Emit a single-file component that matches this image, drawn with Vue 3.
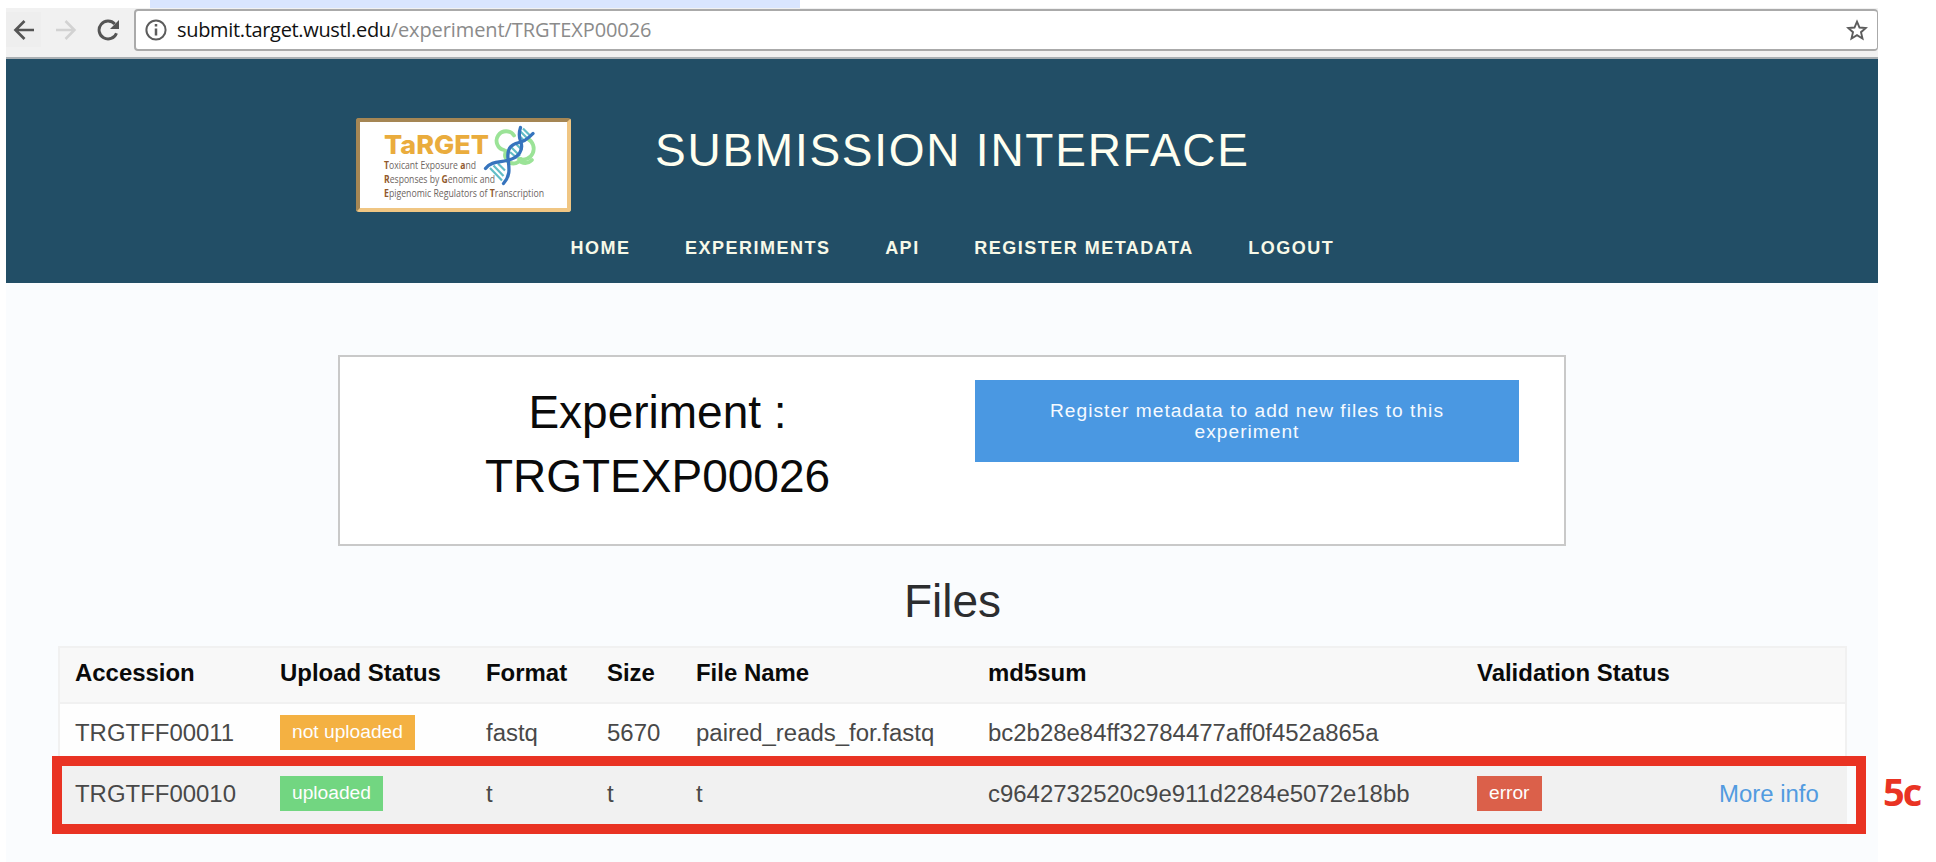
<script setup>
const links = ['HOME', 'EXPERIMENTS', 'API', 'REGISTER METADATA', 'LOGOUT']
const headings = ['Accession', 'Upload Status', 'Format', 'Size', 'File Name', 'md5sum', 'Validation Status', '']
const files = [
  { id: 'TRGTFF00011', upload: 'not uploaded', tone: 'pending', format: 'fastq', size: '5670', name: 'paired_reads_for.fastq', md5: 'bc2b28e84ff32784477aff0f452a865a' },
  { id: 'TRGTFF00010', upload: 'uploaded', tone: 'done', format: 't', size: 't', name: 't', md5: 'c9642732520c9e911d2284e5072e18bb', validation: 'error', more: 'More info' },
]
</script>

<template>
  <div class="canvas">
    <div class="tab-strip"></div>
    <div class="browser">
      <div class="toolbar">
        <span class="tool back">
          <svg width="22" height="22" viewBox="0 0 22 22"><path d="M21 11H3M11.5 2 2.500 11l9 9" fill="none" stroke="#555" stroke-width="2.700" /></svg>
        </span>
        <svg class="forward" width="22" height="22" viewBox="0 0 22 22"><path d="M1 11h18M10.500 2l9 9-9 9" fill="none" stroke="#d2d2d2" stroke-width="2.500" /></svg>
        <svg class="reload" width="22" height="22" viewBox="0 0 22 22"><path d="M19.500 14.200A9 9 0 1 1 17.800 5" fill="none" stroke="#555" stroke-width="2.900" /><path d="M22 1v9h-9z" fill="#555" /></svg>
        <div class="address">
          <svg class="info" width="22" height="22" viewBox="0 0 22 22"><circle cx="11" cy="11" r="9.600" fill="none" stroke="#5c5c5c" stroke-width="2" /><path d="M11 5v2.600M11 9.500v7" stroke="#5c5c5c" stroke-width="2.500" /></svg>
          <span class="url"><span class="host">submit.target.wustl.edu</span><span class="path">/experiment/TRGTEXP00026</span></span>
          <svg class="star" width="22" height="22" viewBox="0 0 22 22"><path d="M11 2.600l2.500 5.900 6.300.5-4.800 4.200 1.500 6.300L11 16.200l-5.500 3.300L7 13.200 2.200 9l6.300-.5z" fill="none" stroke="#5c5c5c" stroke-width="1.900" /></svg>
        </div>
      </div>

      <header class="banner">
        <div class="brand">
          <div class="logo">
            <svg width="207" height="86" viewBox="360 122 207 86">
              <g fill="none" stroke="#9be397" stroke-width="3.800" stroke-linecap="round">
                <path d="M514 135.500a9.500 9.500 0 1 0-10 14.500" />
                <path d="M528 139a11 11 0 0 1-9 20" />
                <path d="M506 151a8 8 0 1 0 15 8" />
                <path d="M532 160a10 10 0 0 1-11 2" />
              </g>
              <path d="M490 168l12 12.500M493.500 165.500l10 10.500M498 163.500l7 7M511 147l9 9M510 152l7 6M516 144l6 6M520.500 131.500l7 7M523 128.500l6.500 6.500M520.500 137l4 4" stroke="#62bdc6" stroke-width="2.200" />
              <g fill="none" stroke="#3674bd" stroke-width="3.300" stroke-linecap="round">
                <path d="M485.500 168.500C491 161 500 162.500 507 160.500 519 158 524 150 520.500 141 519 137 519 132 520.500 127.500" />
                <path d="M503.500 183.500C511 175 509 168 508 158 507 149 511 144 519 142.500 527 141 529.500 136.500 533 133.500" />
              </g>
              <text class="mark" x="384" y="154" textLength="105" lengthAdjust="spacingAndGlyphs">TaRGET</text>
              <g class="tagline">
                <text x="384" y="169" textLength="92" lengthAdjust="spacingAndGlyphs"><tspan>T</tspan>oxicant Exposure <tspan>a</tspan>nd</text>
                <text x="384" y="183" textLength="111" lengthAdjust="spacingAndGlyphs"><tspan>R</tspan>esponses by <tspan>G</tspan>enomic and</text>
                <text x="384" y="197" textLength="160" lengthAdjust="spacingAndGlyphs"><tspan>E</tspan>pigenomic Regulators of <tspan>T</tspan>ranscription</text>
              </g>
            </svg>
          </div>
          <h1>SUBMISSION INTERFACE</h1>
        </div>
        <nav><a v-for="link in links" :key="link">{{ link }}</a></nav>
      </header>

      <section class="card">
        <h2>Experiment :<br>TRGTEXP00026</h2>
        <button class="register">Register metadata to add new files to this<br>experiment</button>
      </section>

      <section class="files">
        <h2>Files</h2>
        <div class="table">
          <div class="row head"><span v-for="(h, i) in headings" :key="i">{{ h }}</span></div>
          <div v-for="f in files" :key="f.id" class="row">
            <span>{{ f.id }}</span>
            <span><b class="badge" :class="f.tone">{{ f.upload }}</b></span>
            <span>{{ f.format }}</span>
            <span>{{ f.size }}</span>
            <span>{{ f.name }}</span>
            <span>{{ f.md5 }}</span>
            <span><b v-if="f.validation" class="badge failed">{{ f.validation }}</b></span>
            <span><a v-if="f.more" class="more">{{ f.more }}</a></span>
          </div>
        </div>
      </section>
    </div>
    <div class="highlight"></div>
    <div class="callout">5c</div>
  </div>
</template>

<style>
body { margin: 0; background: #fff; overflow: hidden; }
</style>

<style scoped>
* { box-sizing: border-box; }
.canvas { position: relative; width: 1936px; height: 862px; overflow: hidden; background: #fff; font-family: "Liberation Sans", Arial, sans-serif; }
.tab-strip { width: 650px; height: 8px; margin-left: 150px; background: #d9e5fe; }
.browser { width: 1872px; height: 854px; margin-left: 6px; background: #fafcfe; }
.toolbar { display: flex; align-items: center; height: 51px; padding-bottom: 6px; background: #f1f1f1; border-bottom: 2px solid #a9afb3; }
.toolbar svg { display: block; flex: none; }
.back { display: flex; align-items: center; width: 35px; height: 35px; padding-left: 7px; background: #eee; }
.forward { margin-left: 14px; }
.reload { margin-left: 20px; }
.address { display: flex; align-items: center; flex: 1; height: 42px; margin-left: 15px; padding: 0 9px 0 9px; background: #fff; border: 2px solid #aaa; border-right-width: 1px; border-radius: 4px; }
.url { margin-left: 10px; padding-top: 1px; font: 20px/38px "Open Sans", "Noto Sans", sans-serif; white-space: nowrap; letter-spacing: -0.100px; }
.host { color: #111; letter-spacing: -0.330px; }
.path { color: #8b8b8b; }
.star { margin-left: auto; }

.banner { height: 224px; padding-top: 59px; background: #224e66; }
.brand { display: flex; align-items: flex-start; height: 94px; padding-left: 350px; }
.logo { width: 215px; height: 94px; border: 4px solid; border-color: #a58654 #f0c683 #f0c683 #a58654; border-radius: 3px; background: #fff; }
.logo svg { display: block; }
.mark { font: 800 26px Inter, sans-serif; fill: #eaac3d; }
.tagline { font: 10.500px "Open Sans", sans-serif; fill: #6d655f; }
.tagline tspan { font-weight: 700; fill: #92592c; }
h1 { margin: 0 0 0 84px; font-size: 46px; font-weight: 400; line-height: 64px; letter-spacing: 1.750px; color: #fffff0; white-space: nowrap; }
nav { display: flex; gap: 54.500px; margin: 24px 0 0 564.600px; font-size: 18px; font-weight: 700; line-height: 24px; letter-spacing: 1.500px; color: #f7f9e8; white-space: nowrap; }

.card { display: flex; align-items: flex-start; width: 1228px; height: 191px; margin: 72px 0 0 332px; padding-top: 23px; background: #fff; border: 2px solid #c9c9c9; }
h2 { margin: 0; font-size: 46px; font-weight: 400; line-height: 64px; text-align: center; }
.card h2 { width: 635px; color: #0a0a0a; }
.register { width: 544px; height: 82px; padding: 0; border: 0; background: #4a98e2; color: #f5faff; font: 19.200px/21px "Liberation Sans", Arial, sans-serif; letter-spacing: 1px; }

.files { width: 1789px; margin: 23px 0 0 52px; }
.files h2 { color: #2c2d2f; }
.table { margin-top: 13px; border: 2px solid #f1f1f1; border-bottom: 0; background: #fefefe; }
.row { display: grid; grid-template-columns: 205px 206px 121px 89px 292px 489px 242px 1fr; height: 61px; padding: 0 0 4px 15px; font-size: 23.950px; line-height: 57px; color: #484848; white-space: nowrap; }
.row:last-child { background: #f1f1f1; }
.head { height: 56px; line-height: 50px; font-weight: 700; color: #0a0a0a; background: #f8f8f8; border-bottom: 2px solid #f1f1f1; }
.badge { display: inline-block; height: 35px; padding: 0 12px 2px; font-size: 19.200px; font-weight: 400; line-height: 33px; vertical-align: middle; color: #fefefe; }
.row > span { display: flex; align-items: center; }
.pending { background: #f4b142; }
.done { background: #72d681; }
.failed { background: #db604a; }
.more { color: #529be0; }

.highlight { position: absolute; left: 52px; top: 756px; width: 1814px; height: 78px; border: 10px solid #e93323; }
.callout { position: absolute; left: 1883px; top: 767px; font: 700 38px/48px "Open Sans", sans-serif; letter-spacing: -2px; color: #e93323; }
</style>
